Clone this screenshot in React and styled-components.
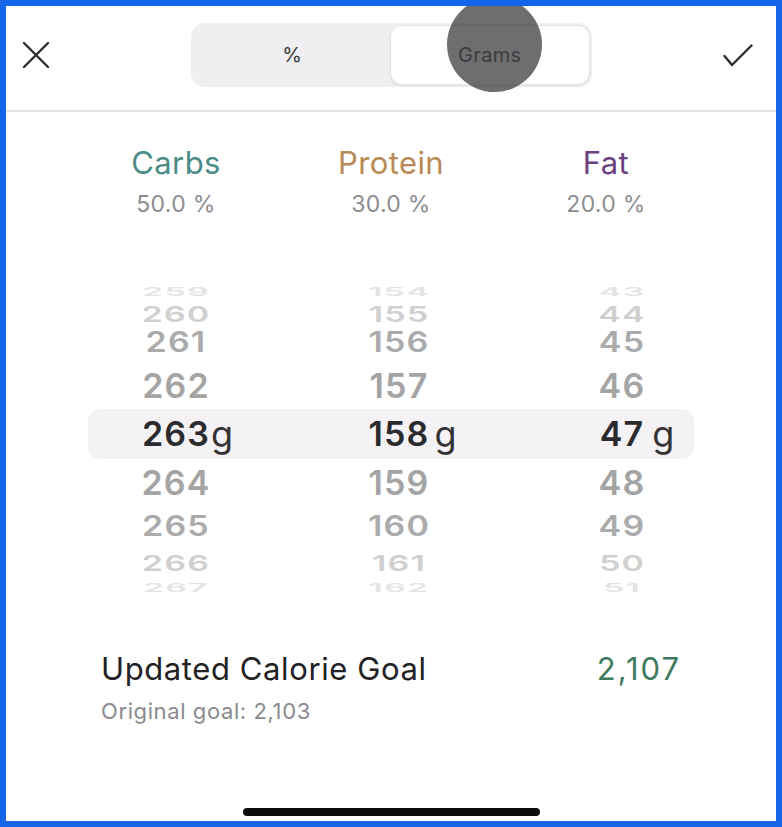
import React from "react";
import styled, { createGlobalStyle } from "styled-components";

const GlobalStyle = createGlobalStyle`
  body {
    margin: 0;
    font-family: "Inter", "Liberation Sans", sans-serif;
    background: #ffffff;
  }
`;

const Frame = styled.div`
  position: relative;
  width: 782px;
  height: 827px;
  box-sizing: border-box;
  border: 6px solid #1565e9;
  background: #ffffff;
  overflow: hidden;
  display: flex;
  flex-direction: column;
`;

const Header = styled.div`
  display: grid;
  grid-template-columns: 1fr auto 1fr;
  align-items: center;
  height: 106px;
  box-sizing: border-box;
  padding: 0 16px 6px;
  border-bottom: 2px solid #e4e4e6;
`;

const IconButton = styled.div`
  display: flex;
  justify-self: ${(p) => (p.end ? "end" : "start")};
  margin-right: ${(p) => (p.end ? "7px" : "0")};
  color: #2d2d2f;
`;

const Segmented = styled.div`
  position: relative;
  display: flex;
  width: 401px;
  height: 64px;
  box-sizing: border-box;
  padding: 3px;
  background: #efeef1;
  border-radius: 14px;
`;

const Segment = styled.div`
  flex: 1;
  display: flex;
  align-items: center;
  justify-content: center;
  font-size: 20px;
  letter-spacing: 0.3px;
  color: #3a3a3c;
  border-radius: 11px;
  background: ${(p) => (p.active ? "#ffffff" : "transparent")};
  box-shadow: ${(p) =>
    p.active ? "0 0 0 1px #e3e3e6, 0 2px 4px rgba(0,0,0,0.05)" : "none"};
`;

const TouchDot = styled.div`
  position: absolute;
  left: 256px;
  top: -26px;
  width: 95px;
  height: 95px;
  border-radius: 50%;
  background: rgba(60, 59, 62, 0.74);
`;

const Macros = styled.div`
  display: grid;
  grid-template-columns: repeat(3, 215px);
  width: 645px;
  margin: 0 auto;
  padding-top: 33px;
`;

const Macro = styled.div`
  display: flex;
  flex-direction: column;
  align-items: center;
`;

const MacroName = styled.div`
  font-size: 31px;
  line-height: 36px;
  letter-spacing: 0.4px;
  color: ${(p) => p.color};
`;

const MacroPct = styled.div`
  margin-top: 10px;
  font-size: 23px;
  line-height: 26px;
  letter-spacing: 0.3px;
  color: #8d8d92;
`;

const Wheel = styled.div`
  width: 606px;
  margin: 58px auto 0;
  display: flex;
  flex-direction: column;
`;

const WheelRow = styled.div`
  display: grid;
  grid-template-columns: 176px 270px 160px;
  align-items: center;
  height: ${(p) => p.h}px;
  background: ${(p) => (p.selected ? "#f4f2f5" : "transparent")};
  border-radius: 12px;
`;

const WheelCell = styled.div`
  display: flex;
  justify-content: center;
  padding-left: ${(p) => p.shift}px;
`;

const WheelNum = styled.span`
  position: relative;
  display: inline-block;
  font-size: 34px;
  font-weight: 600;
  letter-spacing: 1.2px;
  line-height: 1;
  color: ${(p) => p.color};
  transform: scaleY(${(p) => p.scale});
`;

const Unit = styled.span`
  position: absolute;
  left: 100%;
  top: -1px;
  margin-left: ${(p) => p.gap}px;
  font-size: 36px;
  font-weight: 400;
  color: #333335;
`;

const GoalRow = styled.div`
  display: flex;
  justify-content: space-between;
  padding: 0 95px;
  margin-top: 58px;
`;

const GoalTitle = styled.div`
  font-size: 31px;
  line-height: 36px;
  letter-spacing: ${(p) => p.spacing}px;
  color: ${(p) => p.color};
`;

const GoalNote = styled.div`
  padding-left: 95px;
  margin-top: 11px;
  font-size: 22px;
  line-height: 26px;
  letter-spacing: 0.6px;
  color: #8a8a8f;
`;

const HomeBar = styled.div`
  margin: auto auto 5px;
  width: 297px;
  height: 8px;
  border-radius: 4px;
  background: #0a0a0a;
`;

const macros = [
  { name: "Carbs", pct: "50.0 %", color: "#4b8c86" },
  { name: "Protein", pct: "30.0 %", color: "#b88a55" },
  { name: "Fat", pct: "20.0 %", color: "#6b4180" },
];

const rows = [
  { h: 22, scale: 0.35, color: "#e4e4e4", vals: [259, 154, 43] },
  { h: 25, scale: 0.65, color: "#d0d0d0", vals: [260, 155, 44] },
  { h: 40, scale: 0.83, color: "#ababab", vals: [261, 156, 45] },
  { h: 47, scale: 1, color: "#a4a4a4", vals: [262, 157, 46] },
  { h: 50, scale: 1, color: "#2b2b2d", vals: [263, 158, 47], selected: true },
  { h: 47, scale: 1, color: "#a4a4a4", vals: [264, 159, 48] },
  { h: 40, scale: 0.83, color: "#ababab", vals: [265, 160, 49] },
  { h: 25, scale: 0.65, color: "#d0d0d0", vals: [266, 161, 50] },
  { h: 22, scale: 0.35, color: "#e4e4e4", vals: [267, 162, 51] },
];

const shifts = [0, 0, 16];
const gaps = [1, 5, 8];

const App = () => {
  return (
    <>
      <GlobalStyle />
      <Frame>
        <Header>
          <IconButton>
            <svg width="28" height="28" viewBox="0 0 28 28">
              <path
                d="M2 2 L26 26 M26 2 L2 26"
                stroke="currentColor"
                strokeWidth="2.4"
                strokeLinecap="round"
              />
            </svg>
          </IconButton>
          <Segmented>
            <Segment>%</Segment>
            <Segment active>Grams</Segment>
            <TouchDot />
          </Segmented>
          <IconButton end>
            <svg width="31" height="23" viewBox="0 0 31 23">
              <path
                d="M2.5 12 L10 21 L29.5 1.5"
                stroke="currentColor"
                strokeWidth="2.4"
                fill="none"
                strokeLinecap="round"
                strokeLinejoin="round"
              />
            </svg>
          </IconButton>
        </Header>

        <Macros>
          {macros.map((m) => (
            <Macro key={m.name}>
              <MacroName color={m.color}>{m.name}</MacroName>
              <MacroPct>{m.pct}</MacroPct>
            </Macro>
          ))}
        </Macros>

        <Wheel>
          {rows.map((r) => (
            <WheelRow key={r.vals[0]} h={r.h} selected={r.selected}>
              {r.vals.map((v, i) => (
                <WheelCell key={i} shift={shifts[i]}>
                  <WheelNum color={r.color} scale={r.scale}>
                    {v}
                    {r.selected && <Unit gap={gaps[i]}>g</Unit>}
                  </WheelNum>
                </WheelCell>
              ))}
            </WheelRow>
          ))}
        </Wheel>

        <GoalRow>
          <GoalTitle color="#222224" spacing={0.6}>
            Updated Calorie Goal
          </GoalTitle>
          <GoalTitle color="#3e7a5e" spacing={2}>
            2,107
          </GoalTitle>
        </GoalRow>
        <GoalNote>Original goal: 2,103</GoalNote>

        <HomeBar />
      </Frame>
    </>
  );
};

export default App;
